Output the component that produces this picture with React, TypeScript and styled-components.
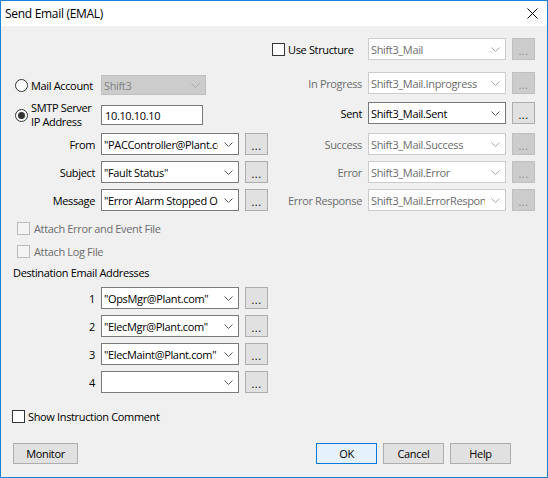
import React from 'react';
import styled, { createGlobalStyle } from 'styled-components';

const Global = createGlobalStyle`
  html, body { margin: 0; padding: 0; background: #f0f0f0; }
  body {
    font-family: "Open Sans", "Liberation Sans", sans-serif;
    font-size: 11px;
    letter-spacing: -0.35px;
    color: #000;
  }
  * { box-sizing: border-box; }
`;

const Window = styled.div`
  width: 548px;
  height: 478px;
  border: 1px solid #1883d7;
  background: #f0f0f0;
  display: flex;
  flex-direction: column;
`;

const TitleBar = styled.div`
  height: 25px;
  flex: none;
  background: #fff;
  display: flex;
  align-items: center;
  justify-content: space-between;
  padding: 0 9px 0 4px;
  font-size: 12px;
  letter-spacing: -0.3px;
`;

const Body = styled.div`
  flex: 1;
  display: flex;
  flex-direction: column;
`;

const Top = styled.div`
  display: flex;
`;

const LeftCol = styled.div`
  width: 269px;
  display: flex;
  flex-direction: column;
`;

const RightCol = styled.div`
  flex: 1;
  display: flex;
  flex-direction: column;
`;

const FieldRow = styled.div<{ $label: number; $mt: number; $h?: number }>`
  display: grid;
  grid-template-columns: ${(p) => p.$label}px 138px 23px;
  column-gap: 6px;
  align-items: center;
  height: ${(p) => p.$h ?? 22}px;
  margin-top: ${(p) => p.$mt}px;
`;

const Label = styled.span<{ $dim?: boolean }>`
  text-align: right;
  white-space: nowrap;
  color: ${(p) => (p.$dim ? '#6d6d6d' : '#000')};
`;

const OptionCell = styled.label<{ $pl: number; $gap: number }>`
  display: flex;
  align-items: center;
  gap: ${(p) => p.$gap}px;
  padding-left: ${(p) => p.$pl}px;
  white-space: nowrap;
`;

const TwoLine = styled.span`
  line-height: 14px;
`;

type ComboKind = 'normal' | 'inactive' | 'locked';

const ComboBox = styled.div<{ $kind: ComboKind; $w?: number; $h?: number }>`
  width: ${(p) => (p.$w ? `${p.$w}px` : '100%')};
  min-width: 0;
  height: ${(p) => p.$h ?? 22}px;
  border: 1px solid
    ${(p) => (p.$kind === 'normal' ? '#7a7a7a' : p.$kind === 'inactive' ? '#cccccc' : '#bfbfbf')};
  background: ${(p) => (p.$kind === 'locked' ? '#cccccc' : '#fff')};
  color: ${(p) => (p.$kind === 'normal' ? '#000' : p.$kind === 'inactive' ? '#6d6d6d' : '#838383')};
  display: flex;
  align-items: center;
  padding-left: 2px;
  overflow: hidden;
`;

const ComboText = styled.span`
  flex: 1;
  min-width: 0;
  overflow: hidden;
  white-space: nowrap;
`;

const ChevronBox = styled.span`
  width: 20px;
  flex: none;
  display: flex;
  align-items: center;
  justify-content: center;
`;

const TextInput = styled.div`
  width: 102px;
  height: 20px;
  border: 1px solid #7a7a7a;
  background: #fff;
  display: flex;
  align-items: center;
  padding-left: 3px;
`;

const Ellipsis = styled.div<{ $off?: boolean }>`
  width: 23px;
  height: 22px;
  border: 1px solid ${(p) => (p.$off ? '#bfbfbf' : '#adadad')};
  background: ${(p) => (p.$off ? '#cccccc' : '#e1e1e1')};
  color: ${(p) => (p.$off ? '#8a8a8a' : '#000')};
  display: flex;
  align-items: center;
  justify-content: center;
  padding-top: 2px;
  letter-spacing: 0.5px;
`;

const Check = styled.span<{ $off?: boolean }>`
  width: 13px;
  height: 13px;
  flex: none;
  border: 1px solid ${(p) => (p.$off ? '#bcbcbc' : '#333')};
  background: ${(p) => (p.$off ? '#f4f4f4' : '#fff')};
`;

const Radio = styled.span<{ $on?: boolean }>`
  width: 13px;
  height: 13px;
  flex: none;
  border-radius: 50%;
  border: 1px solid #333;
  background: #fff;
  display: flex;
  align-items: center;
  justify-content: center;
  &::after {
    content: '';
    width: 7px;
    height: 7px;
    border-radius: 50%;
    background: ${(p) => (p.$on ? '#333' : 'transparent')};
  }
`;

const CheckRow = styled.label<{ $mt: number; $pl: number; $gap: number; $dim?: boolean }>`
  display: flex;
  align-items: center;
  height: 16px;
  margin-top: ${(p) => p.$mt}px;
  padding-left: ${(p) => p.$pl}px;
  gap: ${(p) => p.$gap}px;
  color: ${(p) => (p.$dim ? '#6d6d6d' : '#000')};
`;

const Heading = styled.div<{ $mt: number }>`
  height: 16px;
  line-height: 16px;
  margin-top: ${(p) => p.$mt}px;
  padding-left: 12px;
`;

const ButtonBar = styled.div`
  display: flex;
  align-items: center;
  margin-top: 19px;
  padding: 0 36px 0 12px;
  gap: 6px;
`;

const Spacer = styled.div`
  flex: 1;
`;

const Button = styled.div<{ $w: number; $default?: boolean }>`
  width: ${(p) => p.$w}px;
  height: 21px;
  border: 1px solid ${(p) => (p.$default ? '#0078d7' : '#adadad')};
  background: ${(p) => (p.$default ? '#e5f1fb' : '#e1e1e1')};
  display: flex;
  align-items: center;
  justify-content: center;
`;

const Chevron = ({ color }: { color: string }) => (
  <svg width="9" height="5" viewBox="0 0 9 5">
    <polyline points="0.5,0.5 4.5,4.5 8.5,0.5" fill="none" stroke={color} strokeWidth="1" />
  </svg>
);

const Combo = ({ kind, text, w, h }: { kind: ComboKind; text: string; w?: number; h?: number }) => (
  <ComboBox $kind={kind} $w={w} $h={h}>
    <ComboText>{text}</ComboText>
    <ChevronBox>
      <Chevron color={kind === 'normal' ? '#5a5a5a' : '#a8a8a8'} />
    </ChevronBox>
  </ComboBox>
);

const CloseIcon = () => (
  <svg width="11" height="11" viewBox="0 0 11 11">
    <path d="M0.5 0.5 L10.5 10.5 M10.5 0.5 L0.5 10.5" stroke="#000" strokeWidth="1" />
  </svg>
);

const rightRows: { label: string; value: string; mt: number }[] = [
  { label: 'In Progress', value: 'Shift3_Mail.Inprogress', mt: 12 },
  { label: 'Sent', value: 'Shift3_Mail.Sent', mt: 8 },
  { label: 'Success', value: 'Shift3_Mail.Success', mt: 9 },
  { label: 'Error', value: 'Shift3_Mail.Error', mt: 6 },
  { label: 'Error Response', value: 'Shift3_Mail.ErrorResponse', mt: 6 },
];

const leftRows = [
  { label: 'From', value: '"PACController@Plant.com"', mt: 4 },
  { label: 'Subject', value: '"Fault Status"', mt: 6 },
  { label: 'Message', value: '"Error Alarm Stopped Operation"', mt: 6 },
];

const dests = ['"OpsMgr@Plant.com"', '"ElecMgr@Plant.com"', '"ElecMaint@Plant.com"', ''];

export default function App() {
  return (
    <>
      <Global />
      <Window>
        <TitleBar>
          <span>Send Email (EMAL)</span>
          <CloseIcon />
        </TitleBar>
        <Body>
          <Top>
            <LeftCol>
              <FieldRow $label={94} $mt={48}>
                <OptionCell $pl={14} $gap={3}>
                  <Radio />
                  <span>Mail Account</span>
                </OptionCell>
                <Combo kind="locked" text="Shift3" w={105} h={20} />
              </FieldRow>
              <FieldRow $label={94} $mt={5} $h={28}>
                <OptionCell $pl={14} $gap={3}>
                  <Radio $on />
                  <TwoLine>
                    SMTP Server
                    <br />
                    IP Address
                  </TwoLine>
                </OptionCell>
                <TextInput>10.10.10.10</TextInput>
              </FieldRow>
              {leftRows.map((r) => (
                <FieldRow key={r.label} $label={94} $mt={r.mt}>
                  <Label>{r.label}</Label>
                  <Combo kind="normal" text={r.value} />
                  <Ellipsis>...</Ellipsis>
                </FieldRow>
              ))}
              <CheckRow $mt={9} $pl={16} $gap={4} $dim>
                <Check $off />
                <span>Attach Error and Event File</span>
              </CheckRow>
              <CheckRow $mt={7} $pl={16} $gap={4} $dim>
                <Check $off />
                <span>Attach Log File</span>
              </CheckRow>
              <Heading $mt={6}>Destination Email Addresses</Heading>
              {dests.map((d, i) => (
                <FieldRow key={i} $label={94} $mt={6}>
                  <Label>{i + 1}</Label>
                  <Combo kind="normal" text={d} />
                  <Ellipsis>...</Ellipsis>
                </FieldRow>
              ))}
            </LeftCol>
            <RightCol>
              <FieldRow $label={92} $mt={12}>
                <OptionCell $pl={2} $gap={3}>
                  <Check />
                  <span>Use Structure</span>
                </OptionCell>
                <Combo kind="inactive" text="Shift3_Mail" />
                <Ellipsis $off>...</Ellipsis>
              </FieldRow>
              {rightRows.map((r) => {
                const on = r.label === 'Sent';
                return (
                  <FieldRow key={r.label} $label={92} $mt={r.mt}>
                    <Label $dim={!on}>{r.label}</Label>
                    <Combo kind={on ? 'normal' : 'inactive'} text={r.value} />
                    <Ellipsis $off={!on}>...</Ellipsis>
                  </FieldRow>
                );
              })}
            </RightCol>
          </Top>
          <CheckRow $mt={15} $pl={11} $gap={3}>
            <Check />
            <span>Show Instruction Comment</span>
          </CheckRow>
          <ButtonBar>
            <Button $w={65}>Monitor</Button>
            <Spacer />
            <Button $w={61} $default>
              OK
            </Button>
            <Button $w={61}>Cancel</Button>
            <Button $w={61}>Help</Button>
          </ButtonBar>
        </Body>
      </Window>
    </>
  );
}
